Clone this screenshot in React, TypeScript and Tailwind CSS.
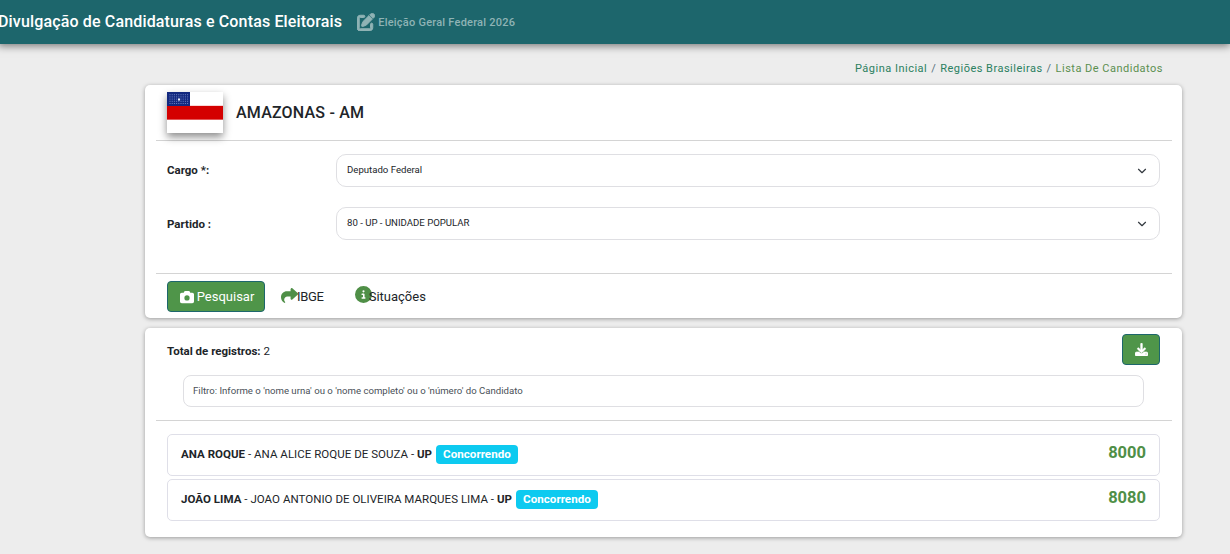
import { FaCamera, FaDownload, FaPenToSquare, FaCircleInfo, FaShare } from "react-icons/fa6";
import { ChevronDown } from "lucide-react";

const font = { fontFamily: "Roboto, sans-serif" };

function Flag() {
  const dots = [];
  for (let r = 0; r < 5; r++)
    for (let c = 0; c < 9; c++)
      dots.push(<rect key={`${r}-${c}`} x={2.5 + c * 2.2} y={2.2 + r * 2.2} width="1" height="1" fill="#6f84c4" />);
  return (
    <svg width="56" height="41" viewBox="0 0 56 41" className="shadow-[0_4px_8px_rgba(0,0,0,0.45)] shrink-0">
      <rect width="56" height="41" fill="#fff" />
      <rect y="13.5" width="56" height="14.5" fill="#f3b0b0" />
      <rect y="14" width="56" height="13.5" fill="#d40000" />
      <rect width="23" height="14" fill="#12287f" />
      {dots}
      <rect x="11" y="6.5" width="2" height="2" fill="#e8ecf8" />
    </svg>
  );
}

function Select({ label, children, mt, labelClass = "" }: { label: string; children: React.ReactNode; mt: string; labelClass?: string }) {
  return (
    <div className={`flex items-center ${mt}`}>
      <div className={`w-[169px] text-[11.5px] font-bold text-[#212529] ${labelClass}`}>{label}</div>
      <div className="flex-1 h-[33px] flex items-center justify-between rounded-[10px] border border-[#dfdfe3] bg-white pl-[10px] pr-[10px] text-[9.6px] text-[#212529]">
        <span className="mb-[1px]">{children}</span>
        <ChevronDown size={14} className="text-[#343a40]" strokeWidth={2} />
      </div>
    </div>
  );
}

function Row({ urna, nome, num }: { urna: string; nome: string; num: string }) {
  return (
    <div className="h-[42px] rounded-[5px] border border-[#dfdfe8] flex items-center justify-between pl-[13px] pr-[13px]">
      <div className="flex items-center text-[11.5px] text-[#212529] tracking-[0.03px]">
        <b className="font-bold whitespace-pre">{urna}</b>
        <span className="whitespace-pre"> - {nome} - </span>
        <b className="font-bold">UP</b>
        <span className="ml-[4px] mb-[1px] h-[19px] flex items-center rounded-[4px] bg-[#0dcaf0] px-[7px] text-[11.6px] font-bold text-white">Concorrendo</span>
      </div>
      <span className="text-[16.5px] font-bold text-[#4f8f47] mb-[3px]">{num}</span>
    </div>
  );
}

export default function App() {
  return (
    <div style={font} className="min-h-[554px] bg-[#ededed] overflow-hidden">
      <header className="h-[44px] bg-[#1d666c] shadow-[0_2px_8px_rgba(0,0,0,0.5)] flex items-center -ml-[2px] whitespace-nowrap">
        <span className="text-[16px] font-medium text-white tracking-[0.15px]">Divulgação de Candidaturas e Contas Eleitorais</span>
        <FaPenToSquare className="ml-[15px] text-[#8fb3b5] mb-[1px]" size={18} stroke="currentColor" strokeWidth={28} />
        <span className="ml-[3px] mt-[3px] text-[11px] font-medium text-[#8fb3b5] tracking-[0.23px]">Eleição Geral Federal 2026</span>
      </header>

      <main className="ml-[145px] w-[1037px]">
        <nav className="h-[41px] flex items-center justify-end pr-[19px] pt-[9px] text-[11px] tracking-[0.49px] text-[#2b8060]">
          <span>Página Inicial</span>
          <span className="mx-[4px] text-[#55707a]">/</span>
          <span>Regiões Brasileiras</span>
          <span className="mx-[4px] text-[#55707a]">/</span>
          <span className="text-[#5b8f50]">Lista De Candidatos</span>
        </nav>

        <section className="h-[233px] rounded-[5px] bg-white shadow-[0_1px_4px_rgba(0,0,0,0.35)] pl-[11px] pr-[10px] flex flex-col">
          <div className="h-[56px] border-b border-[#d4d4d4] flex items-start pl-[11px] pt-[7px]">
            <Flag />
            <span className="ml-[13px] mt-[11px] text-[16px] leading-[20px] font-medium tracking-[0.2px] text-[#212529]">AMAZONAS - AM</span>
          </div>
          <div className="h-[133px] border-b border-[#d4d4d4] pl-[11px] pr-[12px]">
            <Select label="Cargo *:" mt="mt-[13px]">Deputado Federal</Select>
            <Select label="Partido :" mt="mt-[20px]" labelClass="mt-[2px]">80 - UP - UNIDADE POPULAR</Select>
          </div>
          <div className="flex items-center pl-[11px] pt-[7px] text-[13px]">
            <button className="h-[31px] w-[98px] flex items-center justify-center gap-[3px] pl-[2px] rounded-[4px] border border-[#1d666c] bg-[#4f9549] text-white">
              <FaCamera size={14} /> <span>Pesquisar</span>
            </button>
            <div className="ml-[16px] flex items-center text-[#212529]">
              <FaShare size={17} className="text-[#4f8f47] mb-[3px]" />
              <span className="-ml-[1px] tracking-[-0.3px]">IBGE</span>
            </div>
            <div className="ml-[31px] flex items-center text-[#212529]">
              <FaCircleInfo size={17} className="text-[#4f8f47] mb-[4px]" />
              <span className="-ml-[3px]">Situações</span>
            </div>
          </div>
        </section>

        <section className="h-[209px] mt-[10px] rounded-[5px] bg-white shadow-[0_1px_4px_rgba(0,0,0,0.35)] pl-[11px] pr-[10px] flex flex-col">
          <div className="h-[93px] border-b border-[#d4d4d4] pl-[11px] pr-[12px]">
            <div className="flex items-start justify-between pt-[6px]">
              <div className="text-[11.5px] text-[#212529] mt-[9px]"><b className="font-bold">Total de registros:</b> 2</div>
              <button className="h-[31px] w-[38px] flex items-center justify-center rounded-[4px] border border-[#1d666c] bg-[#4f9549] text-white">
                <FaDownload size={13} stroke="currentColor" strokeWidth={24} />
              </button>
            </div>
            <div className="mt-[10px] ml-[16px] mr-[16px] h-[32px] flex items-center rounded-[8px] border border-[#dfdfe3] px-[9px] text-[9.6px] text-[#495057]">
              <span>Filtro: Informe o 'nome urna' ou o 'nome completo' ou o 'número' do Candidato</span>
            </div>
          </div>
          <div className="mt-[13px] ml-[11px] mr-[12px] flex flex-col gap-[3px]">
            <Row urna="ANA ROQUE" nome="ANA ALICE ROQUE DE SOUZA" num="8000" />
            <Row urna="JOÃO LIMA" nome="JOAO ANTONIO DE OLIVEIRA MARQUES LIMA" num="8080" />
          </div>
        </section>
      </main>
    </div>
  );
}
